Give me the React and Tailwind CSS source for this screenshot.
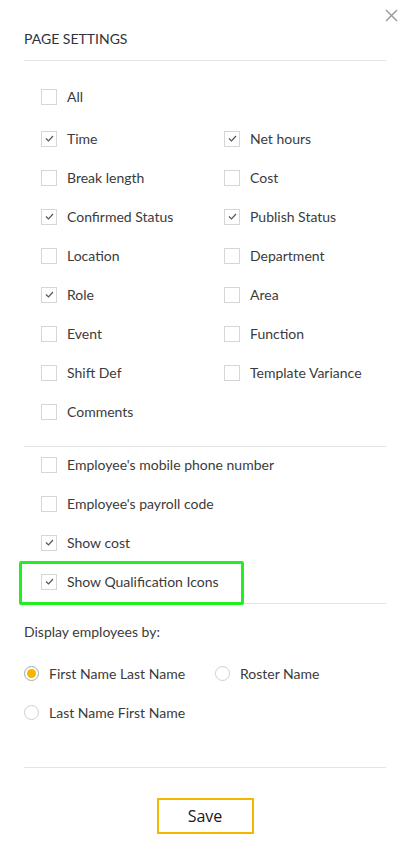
import { useState } from "react"

const columns = [
  [
    { label: "Time", checked: true },
    { label: "Net hours", checked: true },
  ],
  [
    { label: "Break length", checked: false },
    { label: "Cost", checked: false },
  ],
  [
    { label: "Confirmed Status", checked: true },
    { label: "Publish Status", checked: true },
  ],
  [
    { label: "Location", checked: false },
    { label: "Department", checked: false },
  ],
  [
    { label: "Role", checked: true },
    { label: "Area", checked: false },
  ],
  [
    { label: "Event", checked: false },
    { label: "Function", checked: false },
  ],
  [
    { label: "Shift Def", checked: false },
    { label: "Template Variance", checked: false },
  ],
]

const extras = [
  { label: "Employee's mobile phone number", checked: false },
  { label: "Employee's payroll code", checked: false },
  { label: "Show cost", checked: true },
]

function Checkbox({ checked }) {
  return (
    <span className="w-4 h-4 border border-[#d6d6d6] bg-white flex items-center justify-center shrink-0">
      {checked && (
        <svg width="9" height="7" viewBox="0 0 9 7" fill="none" stroke="#555" strokeWidth="1.2">
          <polyline points="1,3.5 3.5,6 8,1" />
        </svg>
      )}
    </span>
  )
}

function CheckRow({ label, checked }) {
  return (
    <label className="h-[39px] flex items-center gap-[10px]">
      <Checkbox checked={checked} />
      <span>{label}</span>
    </label>
  )
}

function Radio({ label, checked, onClick }) {
  return (
    <button onClick={onClick} className="h-[39px] flex items-center gap-[10px] text-left">
      <span
        className={
          checked
            ? "w-[15px] h-[15px] rounded-full border border-[#a8a8a8] flex items-center justify-center shrink-0"
            : "w-[15px] h-[15px] rounded-full border border-[#cfcfcf] flex items-center justify-center shrink-0"
        }
      >
        {checked && <span className="w-[9px] h-[9px] rounded-full bg-[#f7b500]" />}
      </span>
      <span>{label}</span>
    </button>
  )
}

export default function App() {
  const [displayBy, setDisplayBy] = useState("first")

  return (
    <div className="relative w-[414px] min-h-[852px] bg-white text-[14px] text-[#3b3b3b] font-['Lato','Open_Sans',sans-serif]">
      <button aria-label="Close" className="absolute top-[9px] right-[16px] text-[#9a9a9a]">
        <svg width="13" height="13" viewBox="0 0 13 13" stroke="currentColor" strokeWidth="1.4">
          <line x1="1" y1="1" x2="12" y2="12" />
          <line x1="12" y1="1" x2="1" y2="12" />
        </svg>
      </button>

      <div className="px-6 pt-[29px]">
        <h2 className="text-[14px] leading-5 text-[#2f3240] uppercase">Page Settings</h2>
        <div className="mt-[11px] border-t border-[#e3e3e3] w-[362px]" />

        <div className="pl-[17px] pt-[16px]">
          <CheckRow label="All" checked={false} />
          <div className="mt-[3px]">
            {columns.map((row, i) => (
              <div key={i} className="grid grid-cols-[183px_1fr]">
                <CheckRow {...row[0]} />
                <CheckRow {...row[1]} />
              </div>
            ))}
            <CheckRow label="Comments" checked={false} />
          </div>
        </div>

        <div className="mt-[15px] border-t border-[#e3e3e3] w-[362px]" />

        <div className="pl-[17px] -mt-[2px]">
          {extras.map((e) => (
            <CheckRow key={e.label} {...e} />
          ))}
          <div className="relative">
            <CheckRow label="Show Qualification Icons" checked={true} />
            <div className="absolute left-[-22px] top-[-1px] w-[225px] h-[44px] border-[3px] border-[#22ee22] rounded-[2px]" />
          </div>
        </div>

        <div className="mt-[2px] border-t border-[#e3e3e3] w-[362px]" />

        <p className="mt-[18px] leading-5">Display employees by:</p>

        <div className="mt-[12px]">
          <div className="grid grid-cols-[191px_1fr]">
            <Radio label="First Name Last Name" checked={displayBy === "first"} onClick={() => setDisplayBy("first")} />
            <Radio label="Roster Name" checked={displayBy === "roster"} onClick={() => setDisplayBy("roster")} />
          </div>
          <Radio label="Last Name First Name" checked={displayBy === "last"} onClick={() => setDisplayBy("last")} />
        </div>

        <div className="mt-[35px] border-t border-[#e3e3e3] w-[362px]" />

        <div className="flex justify-center mt-[30px] pr-[4px]">
          <button className="w-[97px] h-[36px] border-2 border-[#f7b500] text-[16px] text-[#1a1a1a] font-['Open_Sans',sans-serif]">
            Save
          </button>
        </div>
      </div>
    </div>
  )
}
